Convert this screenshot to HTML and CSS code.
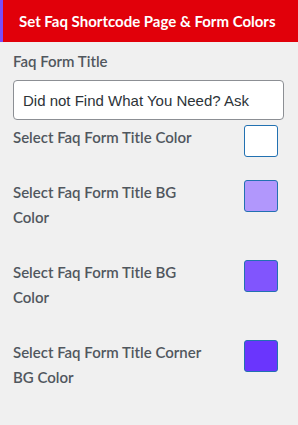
FILE: index.html
```html
<!DOCTYPE html>
<html lang="en">
<head>
  <meta charset="UTF-8" />
  <meta name="viewport" content="width=device-width, initial-scale=1.0"/>
  <title>Faq Form Colors</title>
  <link rel="stylesheet" href="styles.css">
</head>
<body>
<div class="panel">
  <!-- Cabecalho vermelho -->
  <div class="panel-head">Set Faq Shortcode Page &amp; Form Colors</div>

  <div class="panel-body">
    <label class="field-label" for="formTitle">Faq Form Title</label>
    <input class="text-input" id="formTitle" type="text" value="Did not Find What You Need? Ask">

    <div class="color-row">
      <div class="row-label">Select Faq Form Title Color</div>
      <div class="swatch swatch-white"></div>
    </div>

    <div class="color-row">
      <div class="row-label">Select Faq Form Title BG Color</div>
      <div class="swatch swatch-light"></div>
    </div>

    <div class="color-row">
      <div class="row-label">Select Faq Form Title BG Color</div>
      <div class="swatch swatch-mid"></div>
    </div>

    <div class="color-row">
      <div class="row-label">Select Faq Form Title Corner BG Color</div>
      <div class="swatch swatch-dark"></div>
    </div>
  </div>
</div>
</body>
</html>
```

FILE: styles.css
```css
* {
  margin: 0;
  padding: 0;
  box-sizing: border-box;
}

body {
  font-family: Lato, "Open Sans", Arial, sans-serif;
  background: #f0f0f0;
  width: 298px;
  height: 425px;
  overflow: hidden;
}

.panel-head {
  height: 42px;
  background: #e1000a;
  border-left: 3px solid #7a4df9;
  color: #fff;
  font-weight: 700;
  font-size: 15px;
  line-height: 42px;
  padding-left: 16px;
  white-space: nowrap;
}

.panel-body {
  padding: 7px 14px 0 13px;
}

.field-label {
  display: block;
  color: #50575e;
  font-size: 15px;
  font-weight: 600;
  line-height: 25px;
}

.text-input {
  display: block;
  width: 271px;
  height: 40px;
  margin-top: 6px;
  padding: 0 9px;
  border: 1px solid #8c8f94;
  border-radius: 4px;
  background: #fff;
  color: #2c3338;
  font-family: "Liberation Sans", Arial, sans-serif;
  font-size: 15px;
}

.color-row {
  display: flex;
  justify-content: space-between;
  align-items: flex-start;
  margin-top: 5px;
}

.color-row + .color-row {
  margin-top: 0;
}

.row-label {
  width: 196px;
  color: #50575e;
  font-size: 15px;
  font-weight: 600;
  line-height: 25px;
  padding-bottom: 30px;
}

.swatch {
  width: 34px;
  height: 32px;
  margin-right: 6px;
  border: 1px solid #2271b1;
  border-radius: 3px;
}

.swatch-white { background: #fff; }
.swatch-light { background: #b197fc; }
.swatch-mid { background: #8155fd; }
.swatch-dark { background: #6a35fd; }
```
